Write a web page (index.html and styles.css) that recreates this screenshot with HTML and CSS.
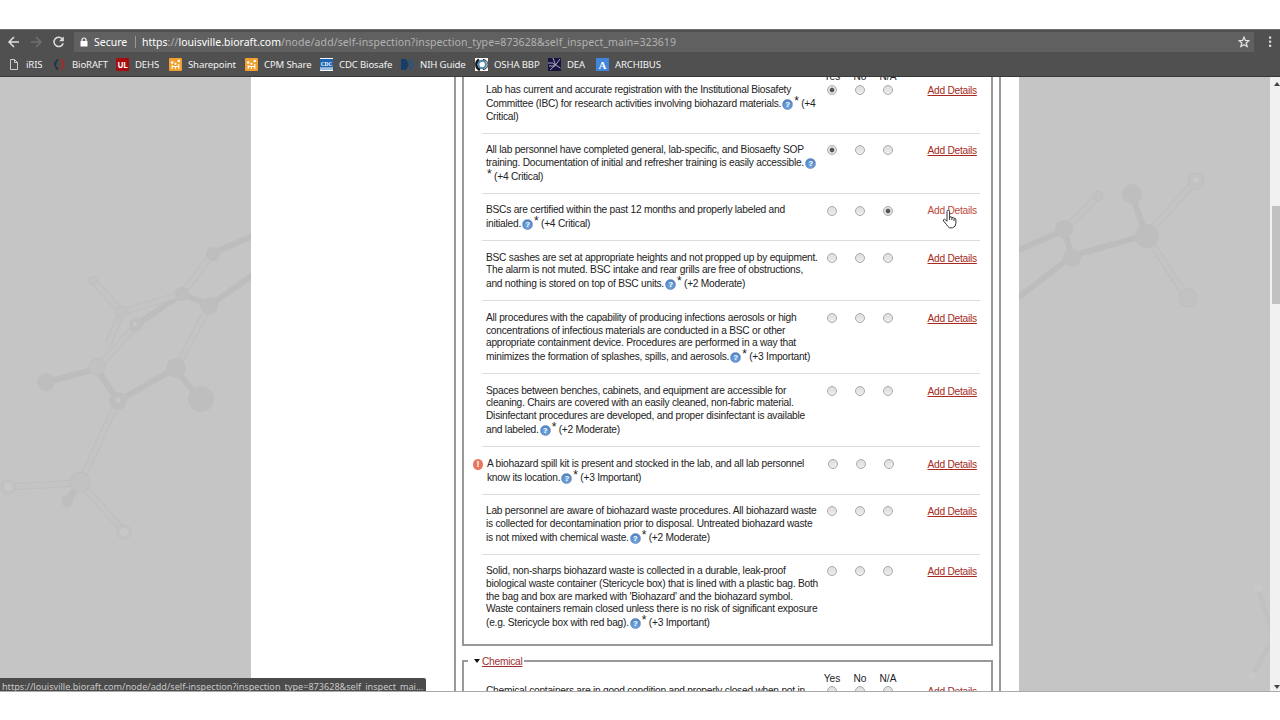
FILE: index.html
```html
<!DOCTYPE html>
<html lang="en">
<head>
  <meta charset="UTF-8" />
  <meta name="viewport" content="width=device-width, initial-scale=1.0"/>
  <title>Self Inspection</title>
  <link rel="stylesheet" href="styles.css">
</head>
<body>

  <div class="browser">
    <div class="toolbar">
      <div class="nav-icons">
        <svg width="64" height="14" viewBox="0 0 64 14" fill="none" stroke="#dedede" stroke-width="1.5">
          <path d="M12 7H2M7 2L2 7l5 5"/>
          <path d="M24 7h10M29 2l5 5-5 5" stroke="#707070"/>
          <path d="M55.200 3.700a4.700 4.700 0 1 0 1 4.600"/>
          <path d="M56.800 1.500v4.700h-4.700z" fill="#dedede" stroke="none"/>
        </svg>
      </div>
      <div class="address">
        <svg class="lock" width="8" height="10" viewBox="0 0 8 10"><path d="M2 5V3a2 2 0 0 1 4 0v2" fill="none" stroke="#fff" stroke-width="1.200"/><rect x=".5" y="4" width="7" height="5.500" rx=".6" fill="#fff"/></svg>
        <span class="secure">Secure</span>
        <span class="url"><b>https</b>://<b>louisville.bioraft.com</b>/node/add/self-inspection?inspection_type=873628&amp;self_inspect_main=323619</span>
        <svg class="star" width="12" height="12" viewBox="0 0 12 12"><path d="M6 1.200l1.400 3.200 3.500.3-2.700 2.300.9 3.500L6 8.700l-3.100 1.800.9-3.500L1.100 4.700l3.500-.3z" fill="none" stroke="#e2e2e2" stroke-width="1.300"/></svg>
      </div>
      <svg class="menu" width="4" height="12" viewBox="0 0 4 12" fill="#dcdcdc"><rect x="1" y="0.500" width="2.200" height="2.200"/><rect x="1" y="4.600" width="2.200" height="2.200"/><rect x="1" y="8.700" width="2.200" height="2.200"/></svg>
    </div>

    <div class="bookmarks">
      <a><svg width="13" height="13" viewBox="0 0 13 13"><path d="M1.500 1.500h4l3 3v7h-7zM5.500 1.500v3h3" fill="none" stroke="#ccc"/></svg><span>iRIS</span></a>
      <a><svg width="13" height="13" viewBox="0 0 13 13" fill="none" stroke-width="2"><path d="M5 1.500Q-1 6.500 5 11.500" stroke="#233546"/><path d="M7.500 1.500Q13.500 6.500 7.500 11.500" stroke="#a52b2b"/></svg><span>BioRAFT</span></a>
      <a><svg width="13" height="13" viewBox="0 0 13 13"><rect width="13" height="13" fill="#a80c0c"/><text x="6.500" y="10" class="ul-text">UL</text></svg><span>DEHS</span></a>
      <a><svg width="13" height="13" viewBox="0 0 13 13"><rect width="13" height="13" rx="1" fill="#f0a02e"/><path d="M3.200 11V7M6.500 11V8.500M9.800 11V6M3 8.500h7" stroke="#fff" stroke-width="1.100"/><g fill="#fff"><circle cx="3.200" cy="4.500" r="1.300"/><circle cx="6.500" cy="5.800" r="1.100"/><circle cx="9.800" cy="3" r="1.300"/></g></svg><span>Sharepoint</span></a>
      <a><svg width="13" height="13" viewBox="0 0 13 13"><rect width="13" height="13" rx="1" fill="#f0a02e"/><path d="M3.200 11V7M6.500 11V8.500M9.800 11V6M3 8.500h7" stroke="#fff" stroke-width="1.100"/><g fill="#fff"><circle cx="3.200" cy="4.500" r="1.300"/><circle cx="6.500" cy="5.800" r="1.100"/><circle cx="9.800" cy="3" r="1.300"/></g></svg><span>CPM Share</span></a>
      <a><svg width="13" height="13" viewBox="0 0 13 13"><rect width="13" height="13" fill="#f4f8fc"/><rect y="1" width="13" height="8.500" fill="#1c65b0"/><path d="M0 11h13" stroke="#4a86c0"/><text x="6.500" y="7.500" class="cdc-text">CDC</text></svg><span>CDC Biosafe</span></a>
      <a><svg width="13" height="13" viewBox="0 0 13 13"><path d="M0 1h5l3 5.500L5 12H0z" fill="#173e68"/><path d="M7.500 1h2.500l3 5.500-3 5.500H7.500l3-5.500z" fill="#285584"/></svg><span>NIH Guide</span></a>
      <a><svg width="13" height="13" viewBox="0 0 13 13"><rect width="13" height="13" fill="#fff"/><path d="M4 1.500A6 6 0 0 0 5 12" fill="none" stroke="#181818" stroke-width="2.500"/><circle cx="7.200" cy="6.500" r="3.700" fill="#fff" stroke="#4e86ad" stroke-width="2"/><path d="M8 1.500a5 5 0 0 1 0 10" fill="none" stroke="#222"/></svg><span>OSHA BBP</span></a>
      <a><svg width="13" height="13" viewBox="0 0 13 13"><rect width="13" height="13" fill="#17133f"/><path d="M0 5q5-1 7.500 2L5 0M7.500 7L12 1M7.500 7L2 12M7.500 7l5 3M1 8h6" fill="none" stroke="#d3cde4" stroke-width=".8"/></svg><span>DEA</span></a>
      <a><svg width="13" height="13" viewBox="0 0 13 13"><rect width="13" height="13" fill="#4384dc"/><text x="6.500" y="10.500" class="arc-text">A</text></svg><span>ARCHIBUS</span></a>
    </div>

    <div class="viewport">
      <svg class="molecule" width="1270" height="614" viewBox="0 77 1270 614">
        <g fill="none" stroke="#bdbdbd" stroke-width="6" stroke-linecap="round">
          <path d="M213 253L260 233M210 305L260 270M182 294L210 305M176 370L200 399M118 401L176 368M97 369L118 401M46 382L97 369M136 325L182 294"/>
          <path d="M1010 254L1064 230L1072 256L1146 235L1132 195M1072 256L1010 304"/>
        </g>
        <g fill="none" stroke="#bebebe" stroke-width="7">
          <path d="M182 294L213 253M97 369L136 325M122 312L182 294M122 312L93 281M122 312L108 344M210 305L176 368M118 401L80 483M80 483L8 487M80 483L124 531M80 483L67 501M1064 230L1098 196M1146 235L1196 181M1146 235L1188 299"/>
        </g>
        <g fill="none" stroke="#c4c4c4" stroke-width="5">
          <path d="M182 294L213 253M97 369L136 325M122 312L182 294M122 312L93 281M122 312L108 344M210 305L176 368M118 401L80 483M80 483L8 487M80 483L124 531M1064 230L1098 196M1146 235L1196 181M1146 235L1188 299"/>
        </g>
        <path d="M1258 588L1274 636L1252 676" fill="none" stroke="#c1c1c1" stroke-width="5"/>
        <g fill="#bebebe">
          <circle cx="213" cy="254" r="7"/><circle cx="182" cy="294" r="7"/><circle cx="209" cy="306" r="9"/>
          <circle cx="136" cy="325" r="7"/><circle cx="176" cy="368" r="10"/><circle cx="201" cy="399" r="13"/>
          <circle cx="118" cy="401" r="9"/><circle cx="46" cy="382" r="9"/><circle cx="67" cy="501" r="6"/>
          <circle cx="1072" cy="258" r="9"/><circle cx="1132" cy="194" r="10"/><circle cx="1147" cy="236" r="12"/><circle cx="1064" cy="229" r="9"/>
        </g>
        <g fill="#c2c2c2" stroke="#bebebe">
          <circle cx="93" cy="281" r="4.500"/><circle cx="97" cy="367" r="8"/><circle cx="80" cy="482" r="10"/><circle cx="122" cy="312" r="6"/>
          <circle cx="8" cy="487" r="7"/><circle cx="124" cy="532" r="7"/><circle cx="1196" cy="181" r="8"/>
          <circle cx="1188" cy="298" r="9"/><circle cx="1098" cy="196" r="5"/>
        </g>
        <g fill="#c8c8c8">
          <circle cx="135" cy="324" r="2"/><circle cx="118" cy="400" r="2.500"/><circle cx="8" cy="487" r="4"/><circle cx="124" cy="532" r="4"/>
          <circle cx="1196" cy="180" r="3"/><circle cx="1258" cy="588" r="4"/><circle cx="1252" cy="676" r="4"/>
        </g>
      </svg>

      <div class="page">
        <div class="form">
          <fieldset class="group biosafety">
            <div class="heads"><span>Yes</span><span>No</span><span>N/A</span></div>

            <div class="row">
              <div class="question">
                <p>Lab has current and accurate registration with the Institutional Biosafety</p>
                <p class="points">Committee (IBC) for research activities involving biohazard materials.<i class="help">?</i><sup>*</sup> (+4</p>
                <p>Critical)</p>
              </div>
              <input type="radio" name="q1" checked><input type="radio" name="q1"><input type="radio" name="q1">
              <a class="details">Add Details</a>
            </div>

            <div class="row">
              <div class="question">
                <p>All lab personnel have completed general, lab-specific, and Biosaefty SOP</p>
                <p>training. Documentation of initial and refresher training is easily accessible.<i class="help">?</i></p>
                <p class="points"><sup>*</sup> (+4 Critical)</p>
              </div>
              <input type="radio" name="q2" checked><input type="radio" name="q2"><input type="radio" name="q2">
              <a class="details">Add Details</a>
            </div>

            <div class="row">
              <div class="question">
                <p>BSCs are certified within the past 12 months and properly labeled and</p>
                <p class="points">initialed.<i class="help">?</i><sup>*</sup> (+4 Critical)</p>
              </div>
              <input type="radio" name="q3"><input type="radio" name="q3"><input type="radio" name="q3" checked>
              <a class="details hovered">Add Details
                <svg class="cursor" width="15" height="20" viewBox="0 0 15 20"><path d="M5 12V2.500a1.300 1.300 0 0 1 2.600 0V8q1.700-.8 2.300.5 1.700-.5 2.100.8 1.900-.3 1.900 1.400v3.500q0 3.800-3.300 4.600H7.500Q5.500 17.500 4.500 15.500L1.500 12q-.5-1.500.8-1.800 1.200 0 2.700 2.300M7.600 8v3M9.900 8.500V11M12 9.500V12" fill="#fff" stroke="#333" stroke-width="1"/></svg>
              </a>
            </div>

            <div class="row">
              <div class="question">
                <p>BSC sashes are set at appropriate heights and not propped up by equipment.</p>
                <p>The alarm is not muted. BSC intake and rear grills are free of obstructions,</p>
                <p class="points">and nothing is stored on top of BSC units.<i class="help">?</i><sup>*</sup> (+2 Moderate)</p>
              </div>
              <input type="radio" name="q4"><input type="radio" name="q4"><input type="radio" name="q4">
              <a class="details">Add Details</a>
            </div>

            <div class="row">
              <div class="question">
                <p>All procedures with the capability of producing infections aerosols or high</p>
                <p>concentrations of infectious materials are conducted in a BSC or other</p>
                <p>appropriate containment device. Procedures are performed in a way that</p>
                <p class="points">minimizes the formation of splashes, spills, and aerosols.<i class="help">?</i><sup>*</sup> (+3 Important)</p>
              </div>
              <input type="radio" name="q5"><input type="radio" name="q5"><input type="radio" name="q5">
              <a class="details">Add Details</a>
            </div>

            <div class="row">
              <div class="question">
                <p>Spaces between benches, cabinets, and equipment are accessible for</p>
                <p>cleaning. Chairs are covered with an easily cleaned, non-fabric material.</p>
                <p>Disinfectant procedures are developed, and proper disinfectant is available</p>
                <p class="points">and labeled.<i class="help">?</i><sup>*</sup> (+2 Moderate)</p>
              </div>
              <input type="radio" name="q6"><input type="radio" name="q6"><input type="radio" name="q6">
              <a class="details">Add Details</a>
            </div>

            <div class="row flagged">
              <span class="alert">!</span>
              <div class="question">
                <p>A biohazard spill kit is present and stocked in the lab, and all lab personnel</p>
                <p class="points">know its location.<i class="help">?</i><sup>*</sup> (+3 Important)</p>
              </div>
              <input type="radio" name="q7"><input type="radio" name="q7"><input type="radio" name="q7">
              <a class="details">Add Details</a>
            </div>

            <div class="row">
              <div class="question">
                <p>Lab personnel are aware of biohazard waste procedures. All biohazard waste</p>
                <p>is collected for decontamination prior to disposal. Untreated biohazard waste</p>
                <p class="points">is not mixed with chemical waste.<i class="help">?</i><sup>*</sup> (+2 Moderate)</p>
              </div>
              <input type="radio" name="q8"><input type="radio" name="q8"><input type="radio" name="q8">
              <a class="details">Add Details</a>
            </div>

            <div class="row">
              <div class="question">
                <p>Solid, non-sharps biohazard waste is collected in a durable, leak-proof</p>
                <p>biological waste container (Stericycle box) that is lined with a plastic bag. Both</p>
                <p>the bag and box are marked with 'Biohazard' and the biohazard symbol.</p>
                <p>Waste containers remain closed unless there is no risk of significant exposure</p>
                <p class="points">(e.g. Stericycle box with red bag).<i class="help">?</i><sup>*</sup> (+3 Important)</p>
              </div>
              <input type="radio" name="q9"><input type="radio" name="q9"><input type="radio" name="q9">
              <a class="details">Add Details</a>
            </div>
          </fieldset>

          <fieldset class="group chemical">
            <legend><span class="arrow"></span><a>Chemical</a></legend>
            <div class="heads"><span>Yes</span><span>No</span><span>N/A</span></div>
            <div class="row">
              <div class="question">
                <p>Chemical containers are in good condition and properly closed when not in</p>
              </div>
              <input type="radio" name="q10"><input type="radio" name="q10"><input type="radio" name="q10">
              <a class="details">Add Details</a>
            </div>
          </fieldset>
        </div>
      </div>

      <div class="scrollbar">
        <span class="up"></span>
        <span class="thumb"></span>
        <span class="down"></span>
      </div>

      <div class="status">https://louisville.bioraft.com/node/add/self-inspection?inspection_type=873628&amp;self_inspect_mai...</div>
    </div>
  </div>

</body>
</html>
```

FILE: styles.css
```css
* {
  box-sizing: border-box;
}

body {
  margin: 0;
  padding-top: 29px;
  height: 720px;
  overflow: hidden;
  background: #fff;
  font-family: "Liberation Sans", Arial, sans-serif;
  font-size: 10.2px;
  color: #222;
}

.browser {
  height: 663px;
  background: #505050;
  border-top: 1px solid #6d6f6d;
}

.toolbar,
.bookmarks,
.status {
  font-family: "Noto Sans", sans-serif;
}

/* Browser chrome */
.toolbar {
  display: flex;
  align-items: center;
  height: 24px;
  padding-left: 7px;
}

.nav-icons {
  width: 67px;
  height: 14px;
}

.address {
  display: flex;
  align-items: center;
  width: 1180px;
  height: 20px;
  padding-left: 6px;
  background: #606060;
  font-size: 10.5px;
}

.secure {
  width: 42px;
  margin: 0 6px;
  color: #fff;
  border-right: 1px solid #999;
  line-height: 12px;
}

.url {
  flex: 1;
  color: #b2b2b2;
  letter-spacing: 0.1px;
  white-space: nowrap;
}

.url b {
  font-weight: normal;
  letter-spacing: 0;
  color: #fff;
}

.star {
  margin-right: 4px;
}

.menu {
  margin-left: 14px;
}

.bookmarks {
  display: grid;
  grid-template-columns: 44px 63px 53px 76px 75px 81px 74px 73px 48px 80px;
  height: 22px;
  padding: 0 0 2px 9px;
  font-size: 9.6px;
  letter-spacing: -0.15px;
  color: #f2f2f2;
}

.bookmarks a {
  display: flex;
  align-items: center;
  gap: 6px;
  white-space: nowrap;
}

.bookmarks a:first-child {
  gap: 4px;
}

.bookmarks svg {
  flex: none;
}

.ul-text,
.cdc-text,
.arc-text {
  fill: #fff;
  text-anchor: middle;
  font: bold 8px "Noto Sans", sans-serif;
}

.cdc-text {
  font: bold 5.5px "Liberation Serif", serif;
}

.arc-text {
  font: bold 11px "Liberation Serif", serif;
}

/* Page */
.viewport {
  position: relative;
  display: flex;
  height: 616px;
  padding-left: 251px;
  overflow: hidden;
  background: #c5c5c5;
  border-top: 1px solid #383838;
  border-bottom: 1px solid #aaa;
}

.molecule {
  position: absolute;
  left: 0;
  top: 0;
}

.page {
  position: relative;
  width: 768px;
  height: 640px;
  padding-left: 203px;
  background: #fff;
}

.form {
  width: 547px;
  height: 640px;
  padding: 0 6px;
  border: solid #999;
  border-width: 0 2px;
}

.group {
  min-width: 0;
  margin: 0;
  padding: 0 11px 0 18px;
  border: 2px solid #999;
}

.biosafety {
  height: 569px;
  border-top: 0;
}

.chemical {
  height: 90px;
  margin-top: 9px;
  padding-left: 4px;
}

.chemical legend {
  display: flex;
  align-items: center;
  gap: 2px;
  height: 12px;
  padding: 0 2px 0 6px;
}

.chemical a {
  color: #9c2f2f;
  letter-spacing: -0.25px;
  text-decoration: underline;
}

.arrow {
  border: 3px solid transparent;
  border-top: 4px solid #111;
  border-bottom: 0;
}

.heads {
  display: grid;
  grid-template-columns: repeat(3, 28px);
  margin-left: 336px;
  height: 12px;
  line-height: 12px;
  text-align: center;
}

.biosafety .heads {
  margin-top: -6px;
}

.chemical .heads {
  margin: 6px 0 0 350px;
  height: 11px;
}

.row {
  position: relative;
  display: grid;
  grid-template-columns: 343px 28px 28px 28px 1fr;
  align-items: start;
  width: 498px;
  padding: 10.4px 0 9.25px 4px;
  border-bottom: 1px solid #ddd;
}

.heads + .row {
  padding-top: 1px;
}

.row:last-child {
  border-bottom: 0;
}

.chemical .row {
  margin-left: 14px;
}

.question {
  letter-spacing: -0.24px;
}

.question p {
  margin: 0;
  height: 12.75px;
  line-height: 12.75px;
  white-space: nowrap;
}

.question .points {
  height: 14px;
  padding-top: 1.3px;
}

sup {
  margin-left: 1px;
  font-size: 12px;
  line-height: 0;
  vertical-align: 2px;
}

.help {
  display: inline-block;
  width: 11px;
  height: 11px;
  margin-left: 1px;
  border: 1px solid #7d9cc9;
  border-radius: 50%;
  background: radial-gradient(circle at 50% 65%, #78b1e8, #3e6fb3);
  color: #fff;
  font: bold 8px/9px "Liberation Sans", sans-serif;
  text-align: center;
  vertical-align: 0;
}

input {
  appearance: none;
  width: 10px;
  height: 10px;
  margin: 1.3px 0 0 -2px;
  border: 1px solid #aaa;
  border-radius: 50%;
  background: linear-gradient(#ddd, #eee);
}

input:checked {
  background: radial-gradient(circle, #555 0 1.8px, #e4e4e4 2.8px);
}

.details {
  position: relative;
  margin: 1px 0 0 14.500px;
  justify-self: start;
  line-height: 12px;
  letter-spacing: -0.25px;
  color: #a52a22;
  text-decoration: underline;
  white-space: nowrap;
}

.hovered {
  color: #c0483c;
  text-decoration: none;
}

.cursor {
  position: absolute;
  left: 14px;
  top: 4px;
}

.flagged {
  padding-left: 5px;
}

.flagged .details {
  margin-left: 13.5px;
}

.alert {
  position: absolute;
  left: -9px;
  top: 12px;
  width: 10px;
  height: 11px;
  border-radius: 50%;
  background: #e8765c;
  color: #fff;
  font: bold 9px/11px "Liberation Sans", sans-serif;
  text-align: center;
}

.scrollbar {
  position: relative;
  display: flex;
  flex-direction: column;
  align-items: flex-end;
  width: 10px;
  height: 614px;
  margin-left: auto;
  padding-top: 5px;
  background: #f1f1f1;
}

.up,
.down {
  border: 3px solid transparent;
  border-top: 0;
  border-bottom: 4px solid #444;
}

.thumb {
  width: 8px;
  height: 98px;
  margin-top: 120px;
  background: #c1c1c1;
}

.down {
  margin-top: 381px;
  border-top: 4px solid #444;
  border-bottom: 0;
}

/* Link preview shown over the page */
.status {
  position: absolute;
  left: 0;
  bottom: 0;
  width: 426px;
  height: 13px;
  padding-left: 2px;
  overflow: hidden;
  border-top-right-radius: 2px;
  background: #4b4b4b;
  color: #c8c8c8;
  font-size: 9.1px;
  line-height: 17px;
  white-space: nowrap;
}
```
